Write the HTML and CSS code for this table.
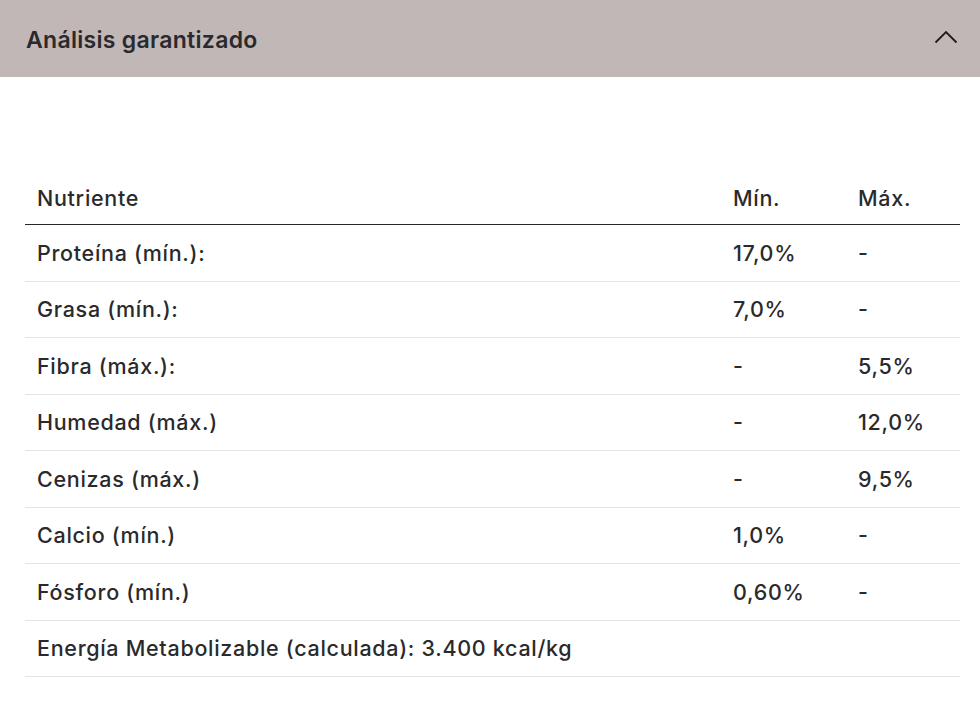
FILE: index.html
```html
<!DOCTYPE html>
<html lang="es">
<head>
<meta charset="utf-8">
<link rel="stylesheet" href="styles.css">
</head>
<body>
<div class="accordion">
  <div class="acc-head">
    <h2 class="acc-title">Análisis garantizado</h2>
    <svg class="chevron" width="24" height="14" viewBox="0 0 24 14"><path d="M1.5 12.5 L12 2 L22.5 12.5" fill="none" stroke="#1c1c1c" stroke-width="1.8"/></svg>
  </div>
  <div class="acc-body">
    <table class="nutri">
      <thead>
        <tr><th class="c1">Nutriente</th><th class="c2">Mín.</th><th class="c3">Máx.</th></tr>
      </thead>
      <tbody>
        <tr><td>Proteína (mín.):</td><td>17,0%</td><td>-</td></tr>
        <tr><td>Grasa (mín.):</td><td>7,0%</td><td>-</td></tr>
        <tr><td>Fibra (máx.):</td><td>-</td><td>5,5%</td></tr>
        <tr><td>Humedad (máx.)</td><td>-</td><td>12,0%</td></tr>
        <tr><td>Cenizas (máx.)</td><td>-</td><td>9,5%</td></tr>
        <tr><td>Calcio (mín.)</td><td>1,0%</td><td>-</td></tr>
        <tr><td>Fósforo (mín.)</td><td>0,60%</td><td>-</td></tr>
        <tr><td colspan="3">Energía Metabolizable (calculada): 3.400 kcal/kg</td></tr>
      </tbody>
    </table>
  </div>
</div>
</body>
</html>
```
FILE: styles.css
```css
html, body {
  margin: 0;
  padding: 0;
  background: #ffffff;
  font-family: "Inter", "Open Sans", sans-serif;
  color: #2a2a2c;
}
.accordion {
  width: 980px;
}
.acc-head {
  height: 77px;
  background: #c1b7b6;
  display: flex;
  align-items: center;
  justify-content: space-between;
  padding: 0 22px 0 26px;
  box-sizing: border-box;
}
.acc-title {
  margin: 0;
  font-size: 23px;
  font-weight: 600;
  letter-spacing: 0.3px;
  color: #2a2a2e;
  padding-top: 3px;
}
.chevron {
  display: block;
  margin-bottom: 4px;
}
.acc-body {
  padding: 93px 20px 0 25px;
}
.nutri {
  width: 935px;
  border-collapse: collapse;
  font-size: 21.5px;
  font-weight: 500;
  letter-spacing: 0.7px;
}
.nutri th {
  text-align: left;
  font-weight: 500;
  height: 52px;
  padding: 2px 0 0 12px;
  border-bottom: 1.5px solid #262626;
  vertical-align: middle;
}
.nutri td {
  height: 55.5px;
  padding: 0 0 0 12px;
  border-bottom: 1px solid #e4e4e4;
  vertical-align: middle;
}
.c1 { width: 684px; }
.c2 { width: 113px; }
```
